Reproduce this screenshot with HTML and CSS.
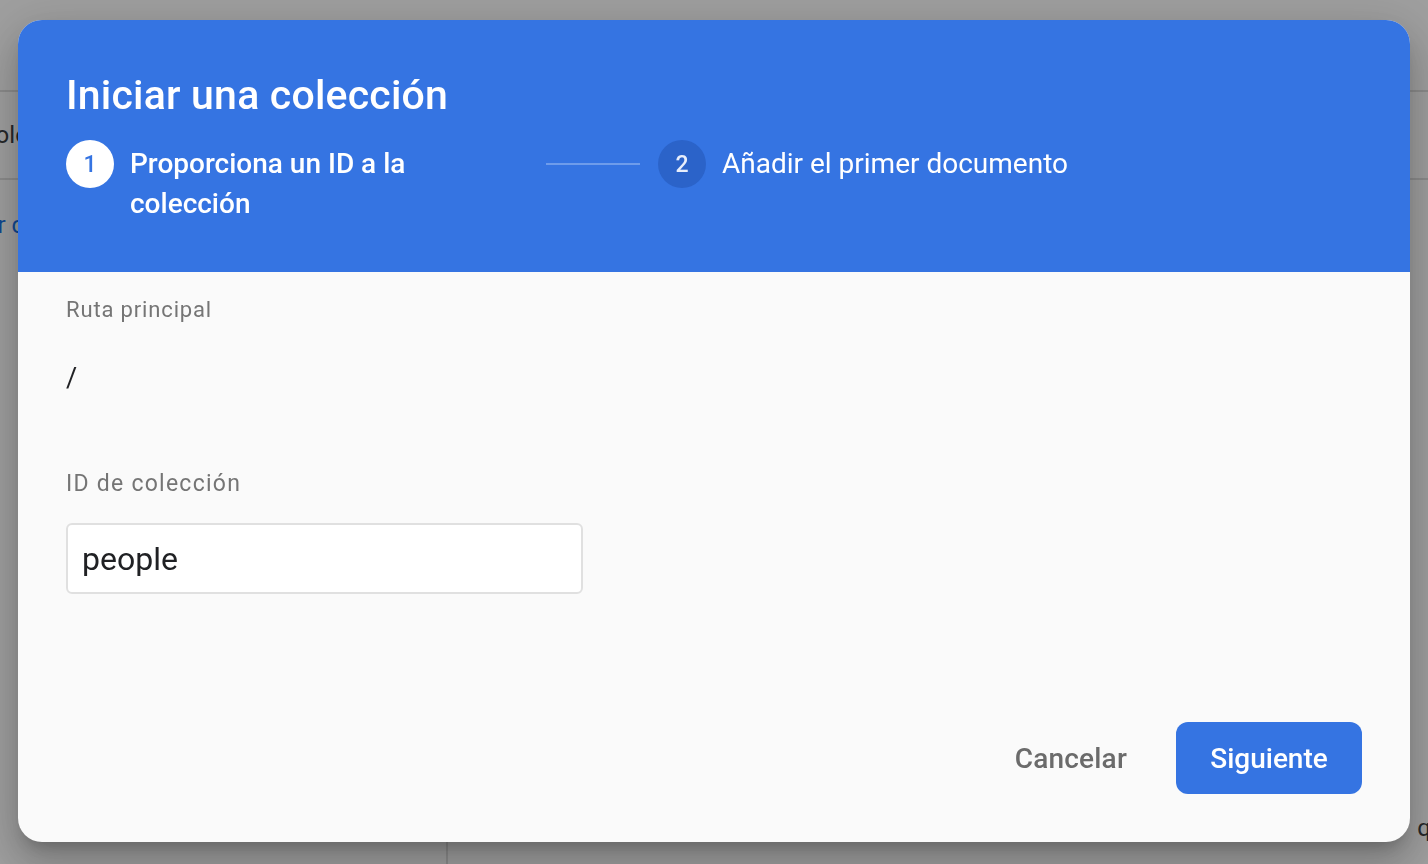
FILE: index.html
```html
<!DOCTYPE html>
<html lang="es">
<head>
<meta charset="utf-8">
<title>Iniciar una colección</title>
<link rel="stylesheet" href="styles.css">
</head>
<body>
<div class="page">
  <div class="page-top"></div>
  <div class="page-row"><span class="page-text">Colo</span></div>
  <div class="page-row2"><span class="page-link">Ver c</span></div>
  <div class="page-bottom">
    <div class="page-col"></div>
    <div class="page-right"><span class="page-q">q</span></div>
  </div>
</div>
<div class="scrim"></div>
<div class="dialog">
  <div class="dialog-header">
    <h1 class="title">Iniciar una colección</h1>
    <div class="stepper">
      <div class="step step-active">
        <div class="step-circle">1</div>
        <div class="step-label">Proporciona un ID a la colección</div>
      </div>
      <div class="step-line"></div>
      <div class="step">
        <div class="step-circle step-circle-dim">2</div>
        <div class="step-label step-label-plain">Añadir el primer documento</div>
      </div>
    </div>
  </div>
  <div class="dialog-body">
    <div class="field-label">Ruta principal</div>
    <div class="path">/</div>
    <div class="field-label field-label-2">ID de colección</div>
    <div class="input-box">people</div>
    <div class="actions">
      <button class="btn-text">Cancelar</button>
      <button class="btn-primary">Siguiente</button>
    </div>
  </div>
</div>
</body>
</html>
```
FILE: styles.css
```css
html, body {
  margin: 0;
  padding: 0;
  width: 1428px;
  height: 864px;
  overflow: hidden;
  font-family: Roboto, "Liberation Sans", Arial, sans-serif;
  background: #ffffff;
}
.page {
  width: 1428px;
  height: 864px;
  display: flex;
  flex-direction: column;
}
.page-top {
  height: 92px;
  border-bottom: 2px solid #e0e0e0;
  box-sizing: border-box;
}
.page-row {
  height: 88px;
  border-bottom: 2px solid #e0e0e0;
  box-sizing: border-box;
  display: flex;
  align-items: center;
}
.page-text {
  font-size: 24px;
  color: #3c4043;
  margin-left: -20px;
}
.page-row2 {
  height: 90px;
  display: flex;
  align-items: center;
}
.page-link {
  font-size: 24px;
  color: #1a73e8;
  margin-left: -30px;
}
.page-bottom {
  flex: 1;
  display: flex;
}
.page-col {
  width: 446px;
  border-right: 2px solid #e0e0e0;
}
.page-right {
  flex: 1;
  display: flex;
  justify-content: flex-end;
  align-items: flex-end;
  padding-bottom: 22px;
}
.page-q {
  font-size: 24px;
  color: #3c4043;
  margin-right: -3px;
}
.scrim {
  position: fixed;
  inset: 0;
  background: rgba(0, 0, 0, 0.38);
}
.dialog {
  position: fixed;
  left: 18px;
  top: 20px;
  width: 1392px;
  height: 822px;
  border-radius: 24px;
  overflow: hidden;
  background: #fafafa;
  display: flex;
  flex-direction: column;
  box-shadow: 0 11px 15px -7px rgba(0,0,0,0.2), 0 24px 38px 3px rgba(0,0,0,0.14), 0 9px 46px 8px rgba(0,0,0,0.12);
}
.dialog-header {
  background: #3574e2;
  height: 252px;
  box-sizing: border-box;
  padding: 50px 48px 0;
  color: #ffffff;
}
.title {
  margin: 0;
  font-size: 41px;
  line-height: 50px;
  font-weight: 500;
  letter-spacing: 0.2px;
}
.stepper {
  display: flex;
  align-items: flex-start;
  margin-top: 20px;
}
.step {
  display: flex;
  align-items: flex-start;
  gap: 16px;
}
.step-active {
  width: 464px;
}
.step-circle {
  width: 48px;
  height: 48px;
  border-radius: 50%;
  background: #ffffff;
  color: #3574e2;
  font-size: 23px;
  font-weight: 500;
  display: flex;
  align-items: center;
  justify-content: center;
  flex-shrink: 0;
}
.step-circle-dim {
  background: #2b63c9;
  color: #e8eefb;
}
.step-label {
  margin-top: 4px;
  font-size: 28px;
  line-height: 40px;
  font-weight: 500;
  width: 300px;
}
.step-label-plain {
  font-weight: 400;
  width: auto;
  white-space: nowrap;
}
.step-line {
  width: 94px;
  height: 2px;
  background: #6e9ceb;
  margin: 23px 18px 0 16px;
}
.dialog-body {
  flex: 1;
  display: flex;
  flex-direction: column;
  padding: 0 48px 48px;
}
.field-label {
  margin-top: 24px;
  font-size: 22px;
  line-height: 28px;
  letter-spacing: 0.85px;
  color: #757575;
}
.path {
  margin-top: 38px;
  font-size: 27px;
  line-height: 32px;
  color: #202124;
}
.field-label-2 {
  margin-top: 76px;
  font-size: 23px;
  letter-spacing: 1.25px;
}
.input-box {
  margin-top: 25px;
  width: 517px;
  height: 71px;
  box-sizing: border-box;
  border: 2px solid #e0e0e0;
  border-radius: 6px;
  background: #ffffff;
  padding: 0 14px;
  display: flex;
  align-items: center;
  font-size: 32px;
  color: #202124;
}
.actions {
  margin-top: auto;
  display: flex;
  justify-content: flex-end;
  align-items: center;
  gap: 24px;
}
.btn-text {
  font-family: inherit;
  border: 0;
  background: transparent;
  font-size: 28px;
  font-weight: 500;
  color: #6b6b6b;
  height: 72px;
  padding: 0 25px;
  letter-spacing: 0.2px;
}
.btn-primary {
  font-family: inherit;
  border: 0;
  background: #3574e2;
  color: #ffffff;
  font-size: 28px;
  font-weight: 500;
  height: 72px;
  width: 186px;
  border-radius: 12px;
}
```
